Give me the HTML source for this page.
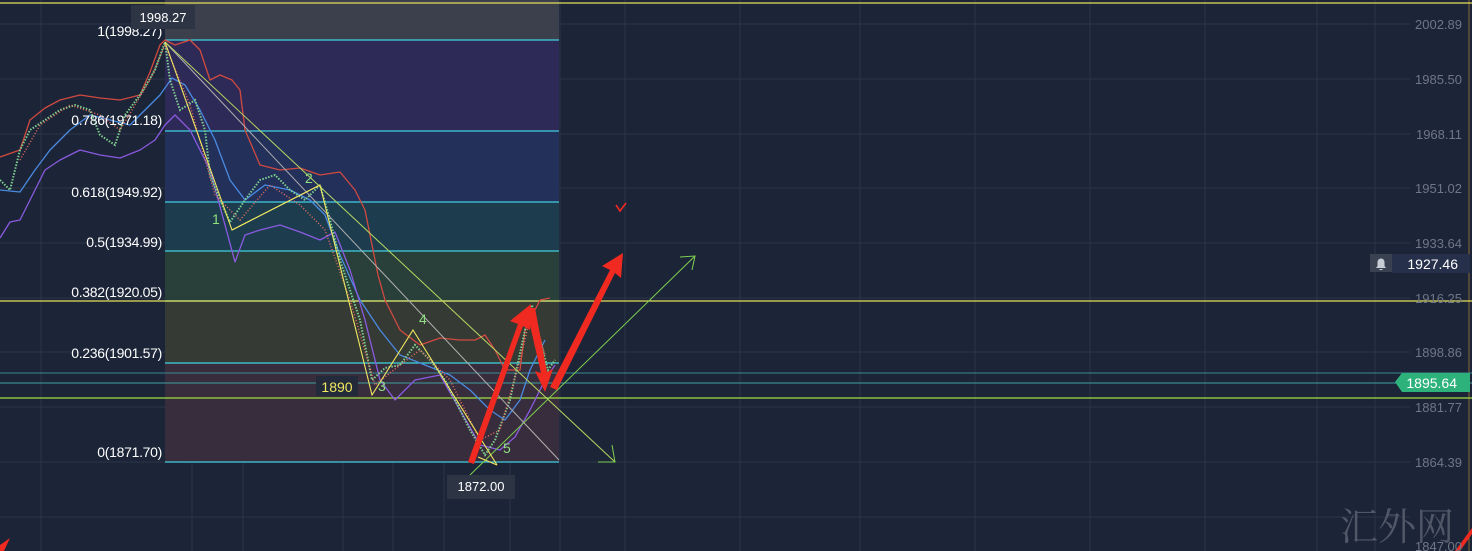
<!DOCTYPE html><html><head><meta charset="utf-8"><style>
html,body{margin:0;padding:0;background:#1c2437;width:1472px;height:551px;overflow:hidden}
svg{display:block}
text{font-family:"Liberation Sans",sans-serif}
</style></head><body>
<svg width="1472" height="551" viewBox="0 0 1472 551" xmlns="http://www.w3.org/2000/svg">
<rect width="1472" height="551" fill="#1c2437"/>
<g stroke="#2c3549" stroke-width="1">
<line x1="41" y1="0" x2="41" y2="551"/><line x1="192" y1="0" x2="192" y2="551"/><line x1="243" y1="0" x2="243" y2="551"/><line x1="343" y1="0" x2="343" y2="551"/><line x1="393" y1="0" x2="393" y2="551"/><line x1="444" y1="0" x2="444" y2="551"/><line x1="510" y1="0" x2="510" y2="551"/><line x1="560" y1="0" x2="560" y2="551"/><line x1="625" y1="0" x2="625" y2="551"/><line x1="740" y1="0" x2="740" y2="551"/><line x1="860" y1="0" x2="860" y2="551"/><line x1="975" y1="0" x2="975" y2="551"/><line x1="1090" y1="0" x2="1090" y2="551"/><line x1="1205" y1="0" x2="1205" y2="551"/><line x1="1317" y1="0" x2="1317" y2="551"/><line x1="1375" y1="0" x2="1375" y2="551"/>
<line x1="0" y1="24" x2="1410" y2="24"/><line x1="0" y1="79" x2="1410" y2="79"/><line x1="0" y1="134" x2="1410" y2="134"/><line x1="0" y1="188" x2="1410" y2="188"/><line x1="0" y1="243" x2="1410" y2="243"/><line x1="0" y1="298" x2="1410" y2="298"/><line x1="0" y1="352" x2="1410" y2="352"/><line x1="0" y1="407" x2="1410" y2="407"/><line x1="0" y1="462" x2="1410" y2="462"/><line x1="0" y1="517" x2="1410" y2="517"/>
</g>
<line x1="1469" y1="0" x2="1469" y2="551" stroke="#8a6a3a" stroke-width="1"/>
<rect x="165" y="0" width="394" height="40" fill="#3b404c"/>
<rect x="165" y="40" width="394" height="91" fill="#2e2a57"/>
<rect x="165" y="131" width="394" height="71" fill="#22305a"/>
<rect x="165" y="202" width="394" height="49" fill="#1d3d4f"/>
<rect x="165" y="251" width="394" height="50" fill="#283f3a"/>
<rect x="165" y="301" width="394" height="63" fill="#363a35"/>
<rect x="165" y="364" width="394" height="98" fill="#382d3c"/>
<g stroke="#3fd0e0" stroke-width="1.2">
<line x1="165" y1="40" x2="559" y2="40"/><line x1="165" y1="131" x2="559" y2="131"/><line x1="165" y1="202" x2="559" y2="202"/><line x1="165" y1="251" x2="559" y2="251"/><line x1="165" y1="301" x2="559" y2="301"/><line x1="165" y1="363" x2="559" y2="363"/><line x1="165" y1="462" x2="559" y2="462"/>
</g>
<line x1="0" y1="3" x2="1472" y2="3" stroke="#e6e05a" stroke-width="1.3"/>
<line x1="0" y1="301" x2="1472" y2="301" stroke="#e6e05a" stroke-width="1.3"/>
<line x1="0" y1="373" x2="1472" y2="373" stroke="#3a8a90" stroke-width="1"/>
<line x1="0" y1="383" x2="1472" y2="383" stroke="#3fa0a0" stroke-width="1"/>
<line x1="0" y1="398" x2="1472" y2="398" stroke="#a0e040" stroke-width="1.2"/>
<polyline fill="none" stroke="#d04a40" stroke-width="1.3" stroke-linejoin="round" points="0,157 20,150 30,120 45,108 60,100 80,95 100,98 120,100 140,95 150,72 160,45 165,40 175,45 190,40 200,50 210,80 220,75 232,80 240,90 245,130 260,165 280,170 300,168 320,175 340,172 355,190 365,210 372,245 378,275 385,300 400,330 420,345 440,338 460,340 475,340 485,335 495,350 505,370 520,370 525,330 540,300 550,298"/>
<polyline fill="none" stroke="#4a8ae0" stroke-width="1.3" stroke-linejoin="round" points="0,190 20,192 35,170 50,150 70,130 90,115 110,120 130,125 145,110 160,95 172,78 185,85 200,110 215,140 230,180 245,200 265,185 290,190 310,200 325,215 340,255 360,300 380,330 400,355 425,365 450,375 470,390 490,410 505,420 520,400 530,370 545,340"/>
<polyline fill="none" stroke="#8a5ae0" stroke-width="1.3" stroke-linejoin="round" points="0,238 10,222 20,220 30,200 45,170 60,160 80,150 100,155 120,158 140,150 155,140 165,125 175,115 190,130 210,170 225,225 235,262 245,235 260,230 280,225 300,232 320,240 335,232 350,270 365,320 380,380 395,400 415,380 440,375 460,410 480,445 500,450 515,437 530,410 545,380 555,365"/>
<polyline fill="none" stroke="#7fcf90" stroke-width="2" stroke-dasharray="1.5 1.5" points="0,180 10,190 20,150 30,130 45,120 60,110 75,105 90,110 100,135 115,145 125,115 140,95 155,70 165,42 170,80 180,110 195,100 205,130 210,175 220,200 230,222 245,200 260,180 275,175 290,190 305,200 320,185 330,220 340,260 350,290 360,320 372,380 385,368 400,365 415,345 430,360 445,380 455,400 470,430 485,455 495,440 510,400 525,330 532,305 540,340 548,370 555,360"/>
<polyline fill="none" stroke="#e87060" stroke-width="1.5" stroke-dasharray="1 2" points="20,160 40,125 70,105 100,115 120,130 150,80 165,45 190,105 215,195 240,220 270,185 300,205 325,230 350,300 375,385 400,365 420,350 450,380 480,440 500,430 520,360 532,310 545,355"/>
<line x1="165" y1="42" x2="559" y2="460" stroke="#b0b0b0" stroke-width="1"/>
<line x1="165" y1="42" x2="615" y2="462" stroke="#b8d860" stroke-width="1"/>
<line x1="470" y1="475" x2="695" y2="256" stroke="#7ed050" stroke-width="1"/>
<polyline fill="none" stroke="#7ed050" points="598,462 615,462 612,445"/>
<polyline fill="none" stroke="#7ed050" points="680,257 695,256 692,270"/>
<polyline fill="none" stroke="#f0e860" stroke-width="1.1" points="165,42 232,230 320,185 372,395 413,330 497,465"/>
<line x1="232" y1="230" x2="320" y2="185" stroke="#f0e860"/>
<line x1="478" y1="457" x2="497" y2="465" stroke="#f0e860"/>
<polygon points="468,462 518,324 510,321 531,304 530,330 523,326 474,464" fill="#f02a20"/>
<polygon points="526,308 535,308 547,372 553,369 545,392 535,371 541,373" fill="#f02a20"/>
<polygon points="550,387 610,270 602,266 623,253 621,278 615,273 557,390" fill="#f02a20"/>
<polyline points="616,205 620,211 626,203" fill="none" stroke="#f02a20" stroke-width="1.6"/>
<polygon points="1455,551 1472,528 1472,534 1460,551" fill="#f02a20"/>
<polygon points="0,545 10,538 4,551 0,551" fill="#f02a20"/>
<g font-size="14" fill="#ffffff" text-anchor="end" letter-spacing="-0.3">
<text x="162" y="36">1(1998.27)</text>
<text x="162" y="125">0.786(1971.18)</text>
<text x="162" y="197">0.618(1949.92)</text>
<text x="162" y="247">0.5(1934.99)</text>
<text x="162" y="297">0.382(1920.05)</text>
<text x="162" y="358">0.236(1901.57)</text>
<text x="162" y="457">0(1871.70)</text>
</g>
<rect x="131" y="5" width="64" height="24" fill="#2d3545"/>
<text x="163" y="22" font-size="13" fill="#fff" text-anchor="middle">1998.27</text>
<rect x="447" y="475" width="68" height="24" fill="#2d3545"/>
<text x="481" y="491" font-size="13" fill="#fff" text-anchor="middle">1872.00</text>
<rect x="316" y="376" width="42" height="20" fill="#232a3a"/>
<text x="337" y="392" font-size="14" fill="#f0e860" text-anchor="middle">1890</text>
<g font-size="14" fill="#8fe080">
<text x="212" y="224">1</text><text x="305" y="183">2</text><text x="378" y="391">3</text><text x="419" y="324">4</text><text x="503" y="453">5</text>
</g>
<g font-size="13" fill="#6e7687" text-anchor="end">
<text x="1462" y="29">2002.89</text><text x="1462" y="84">1985.50</text><text x="1462" y="139">1968.11</text><text x="1462" y="193">1951.02</text><text x="1462" y="248">1933.64</text><text x="1462" y="303">1916.25</text><text x="1462" y="357">1898.86</text><text x="1462" y="412">1881.77</text><text x="1462" y="467">1864.39</text><text x="1462" y="551">1847.00</text>
</g>
<rect x="1370" y="254" width="22" height="18" fill="#3a4252"/>
<path d="M1376,268 h10 l-1.5,-2 v-4 a3.5,3.5 0 0 0 -7,0 v4 z M1379.5,269 h3 v1 h-3z" fill="#c8ccd4"/>
<rect x="1392" y="254" width="78" height="19" fill="#27304a"/>
<text x="1458" y="269" font-size="14" fill="#fff" text-anchor="end">1927.46</text>
<polygon points="1395,382 1402,373 1470,373 1470,392 1402,392" fill="#2db27c"/>
<text x="1457" y="388" font-size="14" fill="#fff" text-anchor="end">1895.64</text>
<text x="1340" y="540" font-size="38" fill="#5a6070" opacity="0.85" style="font-family:'Noto Serif CJK SC','Noto Sans CJK SC',serif">汇外网</text>
</svg>
</body></html>
